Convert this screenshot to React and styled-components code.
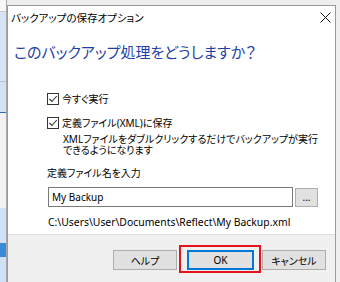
import React from "react";
import styled, { createGlobalStyle } from "styled-components";

const GlobalStyle = createGlobalStyle`
  html, body {
    margin: 0;
    padding: 0;
    background: #f0f0f0;
  }
  body {
    font-family: "Noto Sans", "Noto Sans CJK JP", sans-serif;
    font-feature-settings: "palt";
    color: #000;
  }
`;

const Screen = styled.div`
  width: 340px;
  height: 282px;
  overflow: hidden;
  display: flex;
  background: #f0f0f0;
`;

const LeftStrip = styled.div`
  width: 6px;
  flex: none;
  display: flex;
  flex-direction: column;
  border-right: 1px solid #a8a8a8;
`;

const Stripe = styled.div`
  height: ${(p) => p.$h}px;
  background: ${(p) => p.$c};
  flex: none;
`;

const Column = styled.div`
  display: flex;
  flex-direction: column;
  width: 329px;
  flex: none;
`;

const TopEdge = styled.div`
  height: 5px;
  flex: none;
  background: #eeeeee;
`;

const Dialog = styled.div`
  flex: 1;
  display: flex;
  flex-direction: column;
  background: #fff;
  border: 1px solid #9a9a9a;
  border-bottom: none;
`;

const TitleBar = styled.div`
  height: 22px;
  display: flex;
  align-items: center;
  justify-content: space-between;
  padding: 0 4px 0 3px;
  font-size: 10.5px;
`;

const Heading = styled.h1`
  margin: 14px 0 0 6px;
  font-size: 15px;
  line-height: 20px;
  font-weight: 400;
  color: #1f3fa6;
`;

const Options = styled.div`
  padding: 30px 0 0 39px;
  display: flex;
  flex-direction: column;
  font-size: 10px;
`;

const CheckRow = styled.label`
  display: flex;
  align-items: center;
  gap: 3px;
  height: 14px;
  line-height: 14px;
  margin-top: ${(p) => p.$top || 0}px;
`;

const Note = styled.div`
  margin: 4px 0 0 16px;
  display: flex;
  flex-direction: column;
`;

const NoteLine = styled.span`
  font-size: 10px;
  line-height: 11px;
  height: 11px;
`;

const FieldLabel = styled.div`
  margin-top: 10px;
  line-height: 14px;
`;

const InputRow = styled.div`
  display: flex;
  align-items: flex-start;
  gap: 2px;
  margin: 7px 0 0 1px;
`;

const TextBox = styled.div`
  width: 245px;
  height: 20px;
  box-sizing: border-box;
  border: 1px solid #7a7a7a;
  background: #fff;
  padding-left: 3px;
  display: flex;
  align-items: center;
  font-size: 10px;
`;

const BrowseButton = styled.div`
  width: 23px;
  height: 19px;
  margin-top: 1px;
  box-sizing: border-box;
  border: 1px solid #adadad;
  background: #e1e1e1;
  display: flex;
  align-items: center;
  justify-content: center;
  font-size: 10px;
  padding-bottom: 2px;
`;

const PathText = styled.div`
  margin: 8px 0 0 1px;
  line-height: 14px;
  font-size: 10.4px;
`;

const Footer = styled.div`
  margin-top: 5px;
  flex: 1;
  background: #f0f0f0;
  border-top: 1px solid #dfdfdf;
  display: flex;
  align-items: flex-start;
  justify-content: flex-end;
  padding: 10px 9px 0 0;
`;

const Button = styled.div`
  width: ${(p) => p.$w}px;
  height: 20px;
  box-sizing: border-box;
  margin-top: ${(p) => p.$top || 0}px;
  margin-left: ${(p) => p.$left || 0}px;
  background: #e1e1e1;
  border: ${(p) => (p.$default ? "2px solid #0078d7" : "1px solid #adadad")};
  display: flex;
  align-items: center;
  justify-content: center;
  font-size: 10px;
`;

const Highlight = styled.div`
  margin-left: 2px;
  border: 2px solid #e5141c;
  padding: 3px 5px 1px 6px;
`;

const CheckBox = () => (
  <svg width="12" height="12" viewBox="0 0 12 12">
    <rect x="0.5" y="0.5" width="11" height="11" fill="#fff" stroke="#333" />
    <polyline
      points="2.5,6 5,8.5 9.8,3"
      fill="none"
      stroke="#333"
      strokeWidth="1.1"
    />
  </svg>
);

const CloseIcon = () => (
  <svg width="11" height="11" viewBox="0 0 11 11">
    <path d="M0.5 0.5 L10.5 10.5 M10.5 0.5 L0.5 10.5" stroke="#111" strokeWidth="1" />
  </svg>
);

const stripes = [
  { h: 11, c: "#f7f7f7" },
  { h: 1, c: "#c6c6c6" },
  { h: 69, c: "#d6e4f3" },
  { h: 1, c: "#b8c4d2" },
  { h: 30, c: "#d2e2f4" },
  { h: 1, c: "#2f6db5" },
  { h: 95, c: "#f2f2f2" },
  { h: 35, c: "#cfe1f5" },
  { h: 14, c: "#3b8ad9" },
  { h: 25, c: "#cfe1f5" },
];

const App = () => {
  return (
    <Screen>
      <GlobalStyle />
      <LeftStrip>
        {stripes.map((s, i) => (
          <Stripe key={i} $h={s.h} $c={s.c} />
        ))}
      </LeftStrip>
      <Column>
        <TopEdge />
        <Dialog>
          <TitleBar>
            <span>バックアップの保存オプション</span>
            <CloseIcon />
          </TitleBar>
          <Heading>このバックアップ処理をどうしますか？</Heading>
          <Options>
            <CheckRow>
              <CheckBox />
              今すぐ実行
            </CheckRow>
            <CheckRow $top={10}>
              <CheckBox />
              定義ファイル(XML)に保存
            </CheckRow>
            <Note>
              <NoteLine>XMLファイルをダブルクリックするだけでバックアップが実行</NoteLine>
              <NoteLine>できるようになります</NoteLine>
            </Note>
            <FieldLabel>定義ファイル名を入力</FieldLabel>
            <InputRow>
              <TextBox>My Backup</TextBox>
              <BrowseButton>...</BrowseButton>
            </InputRow>
            <PathText>C:\Users\User\Documents\Reflect\My Backup.xml</PathText>
          </Options>
          <Footer>
            <Button $w={64} $top={5}>ヘルプ</Button>
            <Highlight>
              <Button $w={67} $default>OK</Button>
            </Highlight>
            <Button $w={64} $top={5} $left={1}>キャンセル</Button>
          </Footer>
        </Dialog>
      </Column>
    </Screen>
  );
};

export default App;
